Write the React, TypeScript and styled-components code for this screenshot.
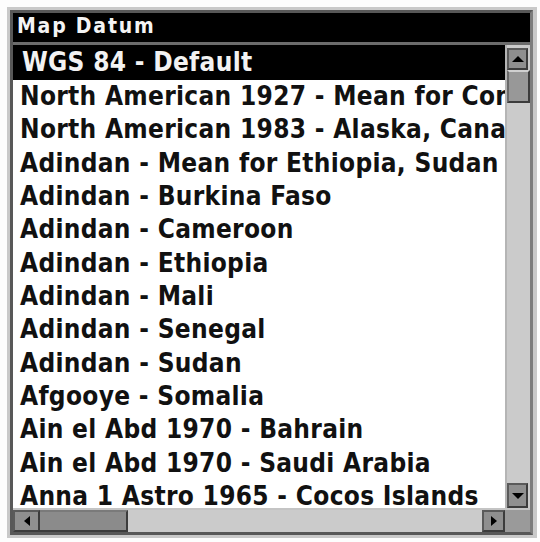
import React from 'react';
import styled, { createGlobalStyle } from 'styled-components';

interface Datum {
  id: number;
  name: string;
}

const datums: Datum[] = [
  { id: 0, name: 'WGS 84 - Default' },
  { id: 1, name: 'North American 1927 - Mean for Conus' },
  { id: 2, name: 'North American 1983 - Alaska, Canada' },
  { id: 3, name: 'Adindan - Mean for Ethiopia, Sudan' },
  { id: 4, name: 'Adindan - Burkina Faso' },
  { id: 5, name: 'Adindan - Cameroon' },
  { id: 6, name: 'Adindan - Ethiopia' },
  { id: 7, name: 'Adindan - Mali' },
  { id: 8, name: 'Adindan - Senegal' },
  { id: 9, name: 'Adindan - Sudan' },
  { id: 10, name: 'Afgooye - Somalia' },
  { id: 11, name: 'Ain el Abd 1970 - Bahrain' },
  { id: 12, name: 'Ain el Abd 1970 - Saudi Arabia' },
  { id: 13, name: 'Anna 1 Astro 1965 - Cocos Islands' },
];

const GlobalStyle = createGlobalStyle`
  html, body {
    margin: 0;
    padding: 0;
    background: #fdfdfd;
  }
  body {
    font-family: "DejaVu Sans Condensed", "DejaVu Sans", "Liberation Sans", sans-serif;
    font-stretch: condensed;
  }
`;

const Page = styled.div`
  width: 540px;
  height: 542px;
  padding: 7px 3px 4px 7px;
  box-sizing: border-box;
`;

const Frame = styled.div`
  border: 3px solid #c9c9c9;
  border-right-width: 4px;
  box-sizing: border-box;
  width: 530px;
  height: 531px;
`;

const Window = styled.div`
  display: flex;
  flex-direction: column;
  height: 100%;
  border: 3px solid #585858;
  border-right-color: #7c7c7c;
  box-sizing: border-box;
  background: #fff;
`;

const TitleBar = styled.div`
  height: 32px;
  flex: none;
  display: flex;
  align-items: center;
  padding: 0 0 3px 4px;
  box-sizing: border-box;
  background: #000;
  color: #f4f4f4;
  font-weight: bold;
  font-size: 21px;
  letter-spacing: 1.8px;
  border-bottom: 3px solid #6c6c6c;
`;

const Body = styled.div`
  flex: 1;
  display: flex;
  min-height: 0;
`;

const List = styled.div`
  flex: 1;
  overflow: hidden;
  min-width: 0;
`;

const Row = styled.div<{ selected: boolean }>`
  height: ${(p) => (p.selected ? '35px' : '33.33px')};
  line-height: ${(p) => (p.selected ? '35px' : '33.33px')};
  padding-left: ${(p) => (p.selected ? '9px' : '7px')};
  background: ${(p) => (p.selected ? '#000' : '#fff')};
  color: ${(p) => (p.selected ? '#f2f2f2' : '#111')};
  font-weight: bold;
  font-size: 26px;
  letter-spacing: 0.3px;
  white-space: nowrap;
`;

const VScroll = styled.div`
  width: 23px;
  flex: none;
  display: flex;
  flex-direction: column;
  padding-top: 3px;
  background: #cbcbcb;
  border-left: 2px solid #b5b5b5;
`;

const Track = styled.div`
  flex: 1;
`;

const ArrowButton = styled.div<{ h: number; w: number }>`
  flex: none;
  height: ${(p) => p.h}px;
  width: ${(p) => p.w}px;
  box-sizing: border-box;
  display: flex;
  align-items: center;
  justify-content: center;
  background: #8f8f8f;
  border: 2px solid #3c3c3c;
  border-top-color: #5a5a5a;
  border-left-color: #5a5a5a;
`;

const VThumb = styled.div`
  flex: none;
  height: 33px;
  box-sizing: border-box;
  background: #989898;
  border: 2px solid #3c3c3c;
  border-top-color: #d0d0d0;
  border-left-color: #6a6a6a;
`;

const HScroll = styled.div`
  height: 24px;
  flex: none;
  display: flex;
  background: #cbcbcb;
  border-top: 2px solid #c4c4c4;
  box-sizing: border-box;
`;

const HThumb = styled.div`
  width: 88px;
  flex: none;
  box-sizing: border-box;
  background: #8b8b8b;
  border: 2px solid #3c3c3c;
  border-left: none;
  border-top-color: #7a7a7a;
`;

const HTrack = styled.div`
  flex: 1;
`;

const Corner = styled.div`
  width: 25px;
  flex: none;
  background: #9a9a9a;
`;

type Dir = 'up' | 'down' | 'left' | 'right';

const Arrow = ({ dir }: { dir: Dir }): JSX.Element => {
  const points: Record<Dir, string> = {
    up: '0,6 6,0 12,6',
    down: '0,0 12,0 6,6',
    left: '6,0 6,10 0,5',
    right: '0,0 0,10 6,5',
  };
  const vertical = dir === 'up' || dir === 'down';
  return (
    <svg width={vertical ? 12 : 6} height={vertical ? 6 : 10} viewBox={vertical ? '0 0 12 6' : '0 0 6 10'}>
      <polygon points={points[dir]} fill="#000" />
    </svg>
  );
};

const App = (): JSX.Element => (
  <>
    <GlobalStyle />
    <Page>
      <Frame>
        <Window>
          <TitleBar>Map Datum</TitleBar>
          <Body>
            <List>
              {datums.map((item, index: number) => (
                <Row key={item.id} selected={index === 0}>
                  {item.name}
                </Row>
              ))}
            </List>
            <VScroll>
              <ArrowButton h={22} w={21}><Arrow dir="up" /></ArrowButton>
              <VThumb />
              <Track />
              <ArrowButton h={25} w={21}><Arrow dir="down" /></ArrowButton>
            </VScroll>
          </Body>
          <HScroll>
            <ArrowButton h={22} w={27}><Arrow dir="left" /></ArrowButton>
            <HThumb />
            <HTrack />
            <ArrowButton h={22} w={23}><Arrow dir="right" /></ArrowButton>
            <Corner />
          </HScroll>
        </Window>
      </Frame>
    </Page>
  </>
);

export default App;
